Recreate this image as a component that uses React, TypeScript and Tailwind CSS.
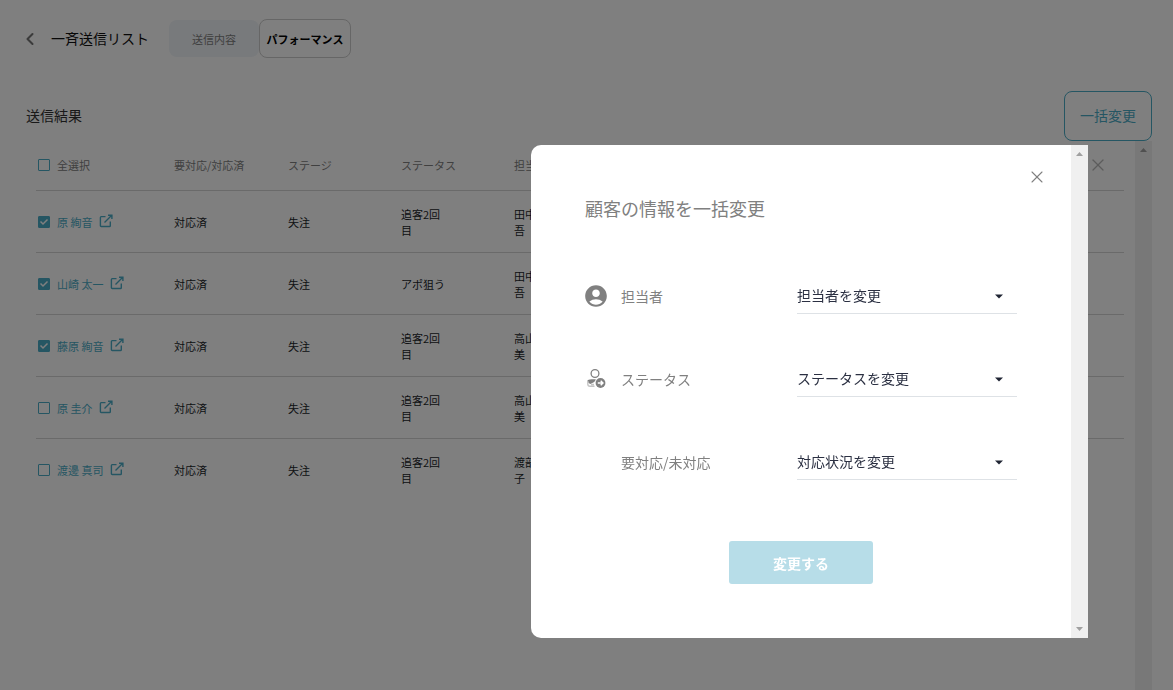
import { useState } from "react";
import { ChevronLeft, X } from "lucide-react";
import { MdAccountCircle } from "react-icons/md";

type Customer = {
  id: number;
  name: string;
  support: string;
  stage: string;
  status: string;
  owner: string;
};

const customers: Customer[] = [
  { id: 1, name: "原 絢音", support: "対応済", stage: "失注", status: "追客2回目", owner: "田中 圭吾" },
  { id: 2, name: "山崎 太一", support: "対応済", stage: "失注", status: "アポ狙う", owner: "田中 圭吾" },
  { id: 3, name: "藤原 絢音", support: "対応済", stage: "失注", status: "追客2回目", owner: "高山 直美" },
  { id: 4, name: "原 圭介", support: "対応済", stage: "失注", status: "追客2回目", owner: "高山 直美" },
  { id: 5, name: "渡邊 真司", support: "対応済", stage: "失注", status: "追客2回目", owner: "渡部 桃子" },
];

function ExternalIcon() {
  return (
    <svg width="14" height="14" viewBox="0 0 14 14" fill="none" stroke="currentColor" strokeWidth="1.4">
      <path d="M6.500 2.600H2.200a.8.8 0 0 0-.8.8v8.300a.8.8 0 0 0 .8.8h8.300a.8.8 0 0 0 .8-.8V7.500" />
      <path d="M5.500 8.500 12.500 1.500M9 1.200h3.900V5" />
    </svg>
  );
}

// person with an arrow badge at the lower right
function StatusIcon() {
  return (
    <svg width="22" height="22" viewBox="0 0 22 22" fill="none">
      <circle cx="10" cy="5.500" r="3.900" stroke="#808080" strokeWidth="1.300" />
      <path d="M2.500 12.300c2-.9 5-1.100 8.500-.8l-1.800 2.500-3.700 2c-1.500-.3-3-1.800-3-3.700z" fill="#808080" />
      <path d="M2.800 13v3c0 1.500 1 2.300 2.200 2.300h4.500M6 16.500h3" stroke="#c4c4c4" strokeWidth="1.400" />
      <circle cx="15.500" cy="15" r="4.900" fill="#808080" />
      <path d="M12.800 15h5M15.700 12.700 18 15l-2.300 2.300" stroke="#fff" strokeWidth="1.400" />
    </svg>
  );
}

function Checkbox({ id, checked, onChange, label }: { id: string; checked: boolean; onChange: () => void; label: string }) {
  return (
    <span className="relative flex">
      <input
        id={id}
        type="checkbox"
        aria-label={label}
        checked={checked}
        onChange={onChange}
        className="size-3 appearance-none rounded-[1px] border border-[#4bacc6] checked:bg-[#4bacc6]"
      />
      {checked && (
        <svg className="pointer-events-none absolute inset-0" width="12" height="12" viewBox="0 0 12 12" fill="none">
          <path d="M2.500 5.500 5 8 9.500 3.500" stroke="#fff" strokeWidth="1.500" />
        </svg>
      )}
    </span>
  );
}

function Select({ id, options }: { id: string; options: string[] }) {
  return (
    <div className="relative">
      <select id={id} className="h-[34px] w-full appearance-none border-b border-[#dee2e6] bg-transparent pr-8 pb-1 text-sm text-[#2b3042]">
        {options.map((o) => (
          <option key={o}>{o}</option>
        ))}
      </select>
      <svg className="pointer-events-none absolute top-[14px] right-[14px]" width="8" height="5" viewBox="0 0 8 5">
        <path d="M0 .5h8L4 4.500z" fill="#1f2433" />
      </svg>
    </div>
  );
}

function ArrowUp() {
  return (
    <svg width="7" height="4" viewBox="0 0 7 4">
      <path d="M0 4 3.500 0 7 4z" fill="#a0a0a0" />
    </svg>
  );
}

export default function App() {
  const [selected, setSelected] = useState<number[]>([1, 2, 3]);
  const [open, setOpen] = useState<boolean>(true);

  const toggle = (id: number) =>
    setSelected(selected.includes(id) ? selected.filter((s) => s !== id) : [...selected, id]);

  const allSelected = selected.length === customers.length;

  return (
    <div className="flex h-screen flex-col overflow-hidden bg-white font-['Noto_Sans_CJK_JP','Noto_Sans',sans-serif]">
      <header className="mt-[19px] flex h-[39px] items-center px-5">
        <button type="button" aria-label="戻る" className="mr-5 text-[#777]">
          <ChevronLeft size={20} strokeWidth={2.5} className="-mr-[9px]" />
        </button>
        <h1 className="pb-0.5 text-sm text-[#111]">一斉送信リスト</h1>
        <nav className="ml-5 flex items-center text-[11px]">
          <button type="button" className="h-[37px] w-[90px] rounded-lg bg-[#f0f4f8] pt-0.5 text-[#808080]">送信内容</button>
          <button type="button" className="h-[39px] w-[92px] rounded-lg border border-[#ccc] bg-white pt-0.5 font-bold text-black">
            パフォーマンス
          </button>
        </nav>
      </header>

      <main className="mt-[33px] flex flex-1 flex-col pr-[21px] pl-[26px]">
        <div className="flex items-center justify-between">
          <h2 className="pb-0.5 text-sm text-[#333]">送信結果</h2>
          <button
            type="button"
            onClick={() => setOpen(true)}
            className="h-[50px] w-[88px] rounded-lg border border-[#4bacc6] pb-0.5 text-sm text-[#4bacc6]"
          >
            一括変更
          </button>
        </div>

        <div className="flex flex-1">
          <div className="flex-1 pr-[11px] pl-[10px]">
            <table className="w-full table-fixed border-separate border-spacing-0 text-left text-[11px] leading-4">
              <colgroup>
                <col className="w-[138px]" />
                <col className="w-[114px]" />
                <col className="w-[113px]" />
                <col className="w-[113px]" />
                <col className="w-[113px]" />
                <col />
              </colgroup>
              <thead>
                <tr className="h-[50px] text-[#808080] *:border-b *:border-[#d4d4d4] *:pb-0.5 *:font-normal">
                  <th>
                    <div className="flex items-center gap-[7px] pl-0.5">
                      <Checkbox
                        id="all"
                        label="全選択"
                        checked={allSelected}
                        onChange={() => setSelected(allSelected ? [] : customers.map((c) => c.id))}
                      />
                      <label htmlFor="all">全選択</label>
                    </div>
                  </th>
                  <th>要対応/対応済</th>
                  <th>ステージ</th>
                  <th>ステータス</th>
                  <th>担当者</th>
                  <th>
                    <div className="flex justify-end pr-4">
                      <button type="button" aria-label="閉じる" className="text-[#b8b8b8]">
                        <X size={20} strokeWidth={1.5} />
                      </button>
                    </div>
                  </th>
                </tr>
              </thead>
              <tbody>
                {customers.map((c) => (
                  <tr key={c.id} className="h-[62px] text-[#212529] *:border-b *:border-[#d4d4d4] last:*:border-b-0">
                    <td>
                      <div className="flex items-center gap-[7px] pl-0.5">
                        <Checkbox id={`c${c.id}`} label={c.name} checked={selected.includes(c.id)} onChange={() => toggle(c.id)} />
                        <a href="#" className="flex items-start gap-[7px] text-[#4bacc6]">
                          {c.name}
                          <ExternalIcon />
                        </a>
                      </div>
                    </td>
                    <td>{c.support}</td>
                    <td>{c.stage}</td>
                    <td className="pr-[68px]">{c.status}</td>
                    <td className="pr-[68px]">{c.owner}</td>
                    <td></td>
                  </tr>
                ))}
              </tbody>
            </table>
          </div>
          <div className="flex w-[17px] justify-center bg-[#f0f0f0] pt-[7px]">
            <ArrowUp />
          </div>
        </div>
      </main>

      {open && (
        <div className="fixed inset-0 flex items-start justify-end bg-black/50 pt-[145px] pr-[85px]">
          <div role="dialog" aria-labelledby="bulk-title" className="flex w-full max-w-[557px] overflow-hidden rounded-l-[10px] bg-white text-[#808080]">
            <div className="flex-1">
              <div className="flex justify-end pt-[22px] pr-6">
                <button type="button" aria-label="閉じる" onClick={() => setOpen(false)}>
                  <X size={20} strokeWidth={1.3} />
                </button>
              </div>
              <form className="flex flex-col px-[54px] pb-[54px]" onSubmit={(e) => e.preventDefault()}>
                <h3 id="bulk-title" className="mt-[7px] mb-[58px] text-lg leading-7">顧客の情報を一括変更</h3>
                <div className="flex flex-col gap-[49px] text-sm">
                  <div className="grid grid-cols-[1fr_220px] items-center">
                    <label htmlFor="owner" className="flex items-center gap-[14px] pb-0.5">
                      <MdAccountCircle size={26} className="-mx-0.5" />
                      担当者
                    </label>
                    <Select id="owner" options={["担当者を変更"]} />
                  </div>
                  <div className="grid grid-cols-[1fr_220px] items-center">
                    <label htmlFor="status" className="flex items-center gap-[14px] pb-0.5">
                      <StatusIcon />
                      ステータス
                    </label>
                    <Select id="status" options={["ステータスを変更"]} />
                  </div>
                  <div className="grid grid-cols-[1fr_220px] items-center">
                    <label htmlFor="support" className="pb-0.5 pl-9">要対応/未対応</label>
                    <Select id="support" options={["対応状況を変更", "要対応", "対応済"]} />
                  </div>
                </div>
                <button type="submit" className="mt-[61px] h-[43px] w-36 self-center rounded-[3px] bg-[#b7dde8] text-sm font-bold text-white">
                  変更する
                </button>
              </form>
            </div>
            <div className="flex w-[17px] flex-col items-center justify-between bg-[#f0f0f0] py-[7px]">
              <ArrowUp />
              <span className="flex rotate-180">
                <ArrowUp />
              </span>
            </div>
          </div>
        </div>
      )}
    </div>
  );
}
